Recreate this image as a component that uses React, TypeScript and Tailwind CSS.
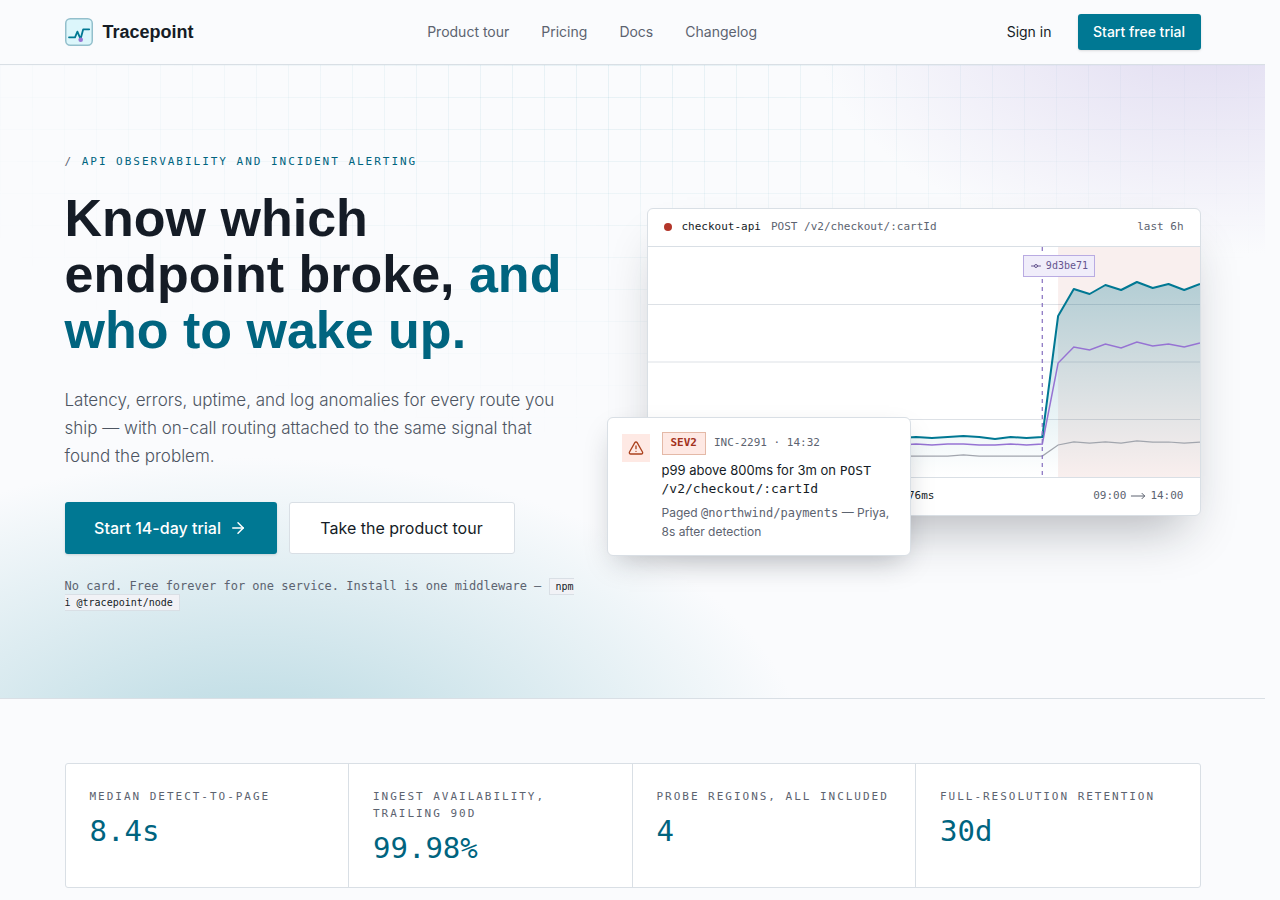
import { ArrowRight, GitCommitHorizontal, MoveRight, TriangleAlert } from "lucide-react";

const navLinks = ["Product tour", "Pricing", "Docs", "Changelog"];

const stats = [
  { label: "Median detect-to-page", value: "8.4s" },
  { label: "Ingest availability, trailing 90d", value: "99.98%" },
  { label: "Probe regions, all included", value: "4" },
  { label: "Full-resolution retention", value: "30d" },
];

const CHART_W = 552;
const CHART_H = 230;

// One sample per step, y in chart units (0 is the top edge)
const p99 = [
  190, 191, 190, 189, 190, 191, 190, 191, 190, 189, 191, 190, 191, 190, 189, 190, 191, 190, 191, 190, 189, 190, 192, 190,
  191, 190, 69, 42, 47, 38, 43, 35, 41, 37, 43, 37,
];
const p95 = [
  198, 198, 197, 198, 198, 197, 198, 198, 197, 198, 198, 197, 198, 198, 197, 198, 198, 197, 198, 197, 197, 198, 198, 197,
  198, 197, 116, 100, 103, 97, 101, 95, 99, 97, 100, 96,
];
const p50 = [
  209, 209, 209, 209, 209, 209, 209, 209, 209, 209, 209, 209, 209, 209, 209, 209, 209, 209, 209, 209, 208, 209, 209, 209,
  209, 209, 198, 195, 196, 195, 196, 194, 195, 195, 196, 195,
];

const stepX = CHART_W / (p99.length - 1);
const toPoints = (series: number[]) => series.map((y, i) => `${(i * stepX).toFixed(1)},${y}`).join(" ");

function Logo() {
  return (
    <svg viewBox="0 0 28 28" className="w-7 h-7" fill="none" aria-hidden="true">
      <rect x="0.75" y="0.75" width="26.5" height="26.5" rx="4.5" fill="#dcf6fb" stroke="#93bfcc" strokeWidth="1.5" />
      <path
        d="M4 19.3h6l2.4-5.6 3.2 7.4 2.6-9.8h6"
        stroke="#007893"
        strokeWidth="1.8"
        strokeLinecap="round"
        strokeLinejoin="round"
      />
      <circle cx="15.7" cy="21.7" r="2.3" fill="#9673d3" />
    </svg>
  );
}

function Header() {
  return (
    <header className="border-b border-[#d9dfe5]">
      <div className="max-w-[1200px] h-16 mx-auto px-8 flex items-center justify-between">
        <a href="#" className="flex items-center gap-2.5 font-['Liberation_Sans',sans-serif] font-bold text-lg text-[#151c26]">
          <Logo />
          Tracepoint
        </a>
        <nav className="flex gap-8 text-sm text-[#5c6370]">
          {navLinks.map((l) => (
            <a key={l} href="#">
              {l}
            </a>
          ))}
        </nav>
        <div className="flex items-center gap-2.5 text-sm">
          <a href="#" className="px-4">
            Sign in
          </a>
          <a
            href="#"
            className="w-[123px] h-9 flex items-center justify-center rounded-[3px] bg-[#007893] font-medium text-white shadow-sm"
          >
            Start free trial
          </a>
        </div>
      </div>
    </header>
  );
}

function Chart() {
  return (
    <div className="relative border-y border-[#d9dfe5]">
      <svg viewBox={`0 0 ${CHART_W} ${CHART_H}`} preserveAspectRatio="none" className="block w-full h-[230px]" fill="none">
        <defs>
          <linearGradient id="p99-fill" x1="0" y1="0" x2="0" y2="1">
            <stop offset="0" stopColor="#007893" stopOpacity="0.28" />
            <stop offset="1" stopColor="#007893" stopOpacity="0" />
          </linearGradient>
        </defs>
        {[57.5, 115, 172.5].map((y) => (
          <path key={y} d={`M0 ${y}H${CHART_W}`} stroke="#dde1e6" />
        ))}
        <rect x={26 * stepX} width={9 * stepX} height={CHART_H} fill="#b3362a" fillOpacity="0.08" />
        <polygon points={`0,${CHART_H} ${toPoints(p99)} ${CHART_W},${CHART_H}`} fill="url(#p99-fill)" />
        <polyline points={toPoints(p50)} stroke="#a1a5ad" strokeWidth="1.25" />
        <polyline points={toPoints(p95)} stroke="#9673d3" strokeWidth="1.5" />
        <polyline points={toPoints(p99)} stroke="#007893" strokeWidth="2" strokeLinejoin="round" />
        <path d={`M${25 * stepX} 0V${CHART_H}`} stroke="#8a74c2" strokeWidth="1.25" strokeDasharray="4 4" />
      </svg>
      <span className="absolute left-[68%] top-2 h-[22px] px-1.5 flex items-center gap-1 border border-[#b9abe2] bg-[#f0edfa] text-[10px] text-[#65558f]">
        <GitCommitHorizontal className="w-3 h-3" />
        9d3be71
      </span>
    </div>
  );
}

function IncidentAlert() {
  return (
    <div className="absolute bottom-0 -left-10 w-[304px] p-3.5 flex items-start gap-3 bg-white rounded-md border border-[#d9dfe5] shadow-[0_12px_28px_-8px_rgba(21,28,38,0.28)]">
      <span className="shrink-0 w-7 h-7 mt-0.5 flex items-center justify-center bg-[#fee9e4] text-[#ab421e]">
        <TriangleAlert className="w-4 h-4" />
      </span>
      <div>
        <div className="flex items-center gap-2 font-['DejaVu_Sans_Mono',monospace] text-[11px] text-[#5c6370]">
          <span className="h-[23px] px-2 flex items-center border border-[#e4b9a7] bg-[#fee9e4] font-bold text-[#a3321c]">
            SEV2
          </span>
          INC-2291 · 14:32
        </div>
        <p className="mt-1.5 text-[13px] leading-[18px]">
          p99 above 800ms for 3m on{" "}
          <span className="font-['DejaVu_Sans_Mono',monospace] leading-none">POST /v2/checkout/:cartId</span>
        </p>
        <p className="mt-1.5 text-xs leading-[19px] text-[#5c6370]">
          Paged <span className="font-['DejaVu_Sans_Mono',monospace] leading-none">@northwind/payments</span> — Priya, 8s
          after detection
        </p>
      </div>
    </div>
  );
}

function HeroPanel() {
  return (
    <div className="relative pb-10 font-['DejaVu_Sans_Mono',monospace] text-[11px] text-[#5c6370]">
      <div className="bg-white rounded-md border border-[#d9dfe5] shadow-[0_28px_48px_-16px_rgba(21,28,38,0.3)]">
        <div className="h-[37px] px-4 flex items-center gap-2.5">
          <span className="w-2 h-2 rounded-full bg-[#b3362a]" />
          <span className="text-[#151c26]">checkout-api</span>
          <span>POST /v2/checkout/:cartId</span>
          <span className="ml-auto">last 6h</span>
        </div>
        <Chart />
        <div className="h-[37px] px-4 flex items-center justify-between">
          <span className="w-[271px] text-right text-[#151c26]">76ms</span>
          <span className="flex items-center gap-1">
            09:00
            <MoveRight className="w-4 h-4" strokeWidth={1.5} />
            14:00
          </span>
        </div>
      </div>
      <div className="font-[Inter,sans-serif] text-[#151c26]">
        <IncidentAlert />
      </div>
    </div>
  );
}

function Hero() {
  return (
    <section className="relative border-b border-[#d9dfe5] bg-[radial-gradient(ellipse_32%_38%_at_96%_-8%,#dfdaf0,transparent),radial-gradient(ellipse_44%_50%_at_20%_112%,#b4d7e0,transparent)]">
      <div className="absolute inset-0 bg-[linear-gradient(to_right,rgba(0,120,147,0.08)_1px,transparent_1px),linear-gradient(to_bottom,rgba(0,120,147,0.08)_1px,transparent_1px)] bg-[size:32px_32px] [mask-image:radial-gradient(ellipse_58%_60%_at_50%_0%,black,transparent)]" />
      <div className="relative max-w-[1200px] mx-auto px-8 py-[88px] grid grid-cols-[518fr_554fr] gap-16 items-center">
        <div>
          <p className="font-['DejaVu_Sans_Mono',monospace] text-[11px] leading-[17px] uppercase tracking-[0.18em] text-[#00647f]">
            <span className="text-[#5c6370]">/</span> API observability and incident alerting
          </p>
          <h1 className="mt-5 font-['Liberation_Sans',sans-serif] font-bold text-[52px] leading-[56px] text-[#151c26]">
            Know which
            <br />
            endpoint broke, <span className="text-[#00647f]">and who to wake up.</span>
          </h1>
          <p className="mt-7 max-w-[510px] text-[17px] leading-7 font-light text-[#4d5562]">
            Latency, errors, uptime, and log anomalies for every route you ship — with on-call routing attached to the same
            signal that found the problem.
          </p>
          <div className="mt-8 flex gap-3">
            <a
              href="#"
              className="w-[212px] h-[52px] flex items-center justify-center gap-2 rounded-[3px] bg-[#007893] font-medium text-white shadow-sm"
            >
              Start 14-day trial
              <ArrowRight className="w-[18px] h-[18px]" />
            </a>
            <a
              href="#"
              className="w-[226px] h-[52px] flex items-center justify-center rounded-[3px] border border-[#d9dfe5] bg-white"
            >
              Take the product tour
            </a>
          </div>
          <p className="mt-6 font-['DejaVu_Sans_Mono',monospace] text-xs leading-4 text-[#5c6370]">
            No card. Free forever for one service. Install is one middleware —{" "}
            <code className="px-1.5 py-0.5 border border-[#d9dfe5] bg-[#f1f2f6] font-['DejaVu_Sans_Mono',monospace] text-[10px] leading-none text-[#151c26]">
              npm
              <br />i @tracepoint/node
            </code>
          </p>
        </div>
        <HeroPanel />
      </div>
    </section>
  );
}

function Stats() {
  return (
    <section className="max-w-[1200px] mx-auto px-8 py-16">
      <dl className="grid grid-cols-4 font-['DejaVu_Sans_Mono',monospace] bg-white border border-[#d9dfe5] rounded-[3px] divide-x divide-[#d9dfe5]">
        {stats.map((s) => (
          <div key={s.label} className="p-6">
            <dt className="text-[11px] leading-[17px] uppercase tracking-[0.18em] text-[#5c6370]">{s.label}</dt>
            <dd className="mt-3 text-[29px] leading-[29px] text-[#00647f]">{s.value}</dd>
          </div>
        ))}
      </dl>
    </section>
  );
}

export default function App() {
  return (
    <div className="pr-[15px] bg-[#fafbfd] font-[Inter,sans-serif] text-[#151c26]">
      <Header />
      <main>
        <Hero />
        <Stats />
      </main>
    </div>
  );
}
